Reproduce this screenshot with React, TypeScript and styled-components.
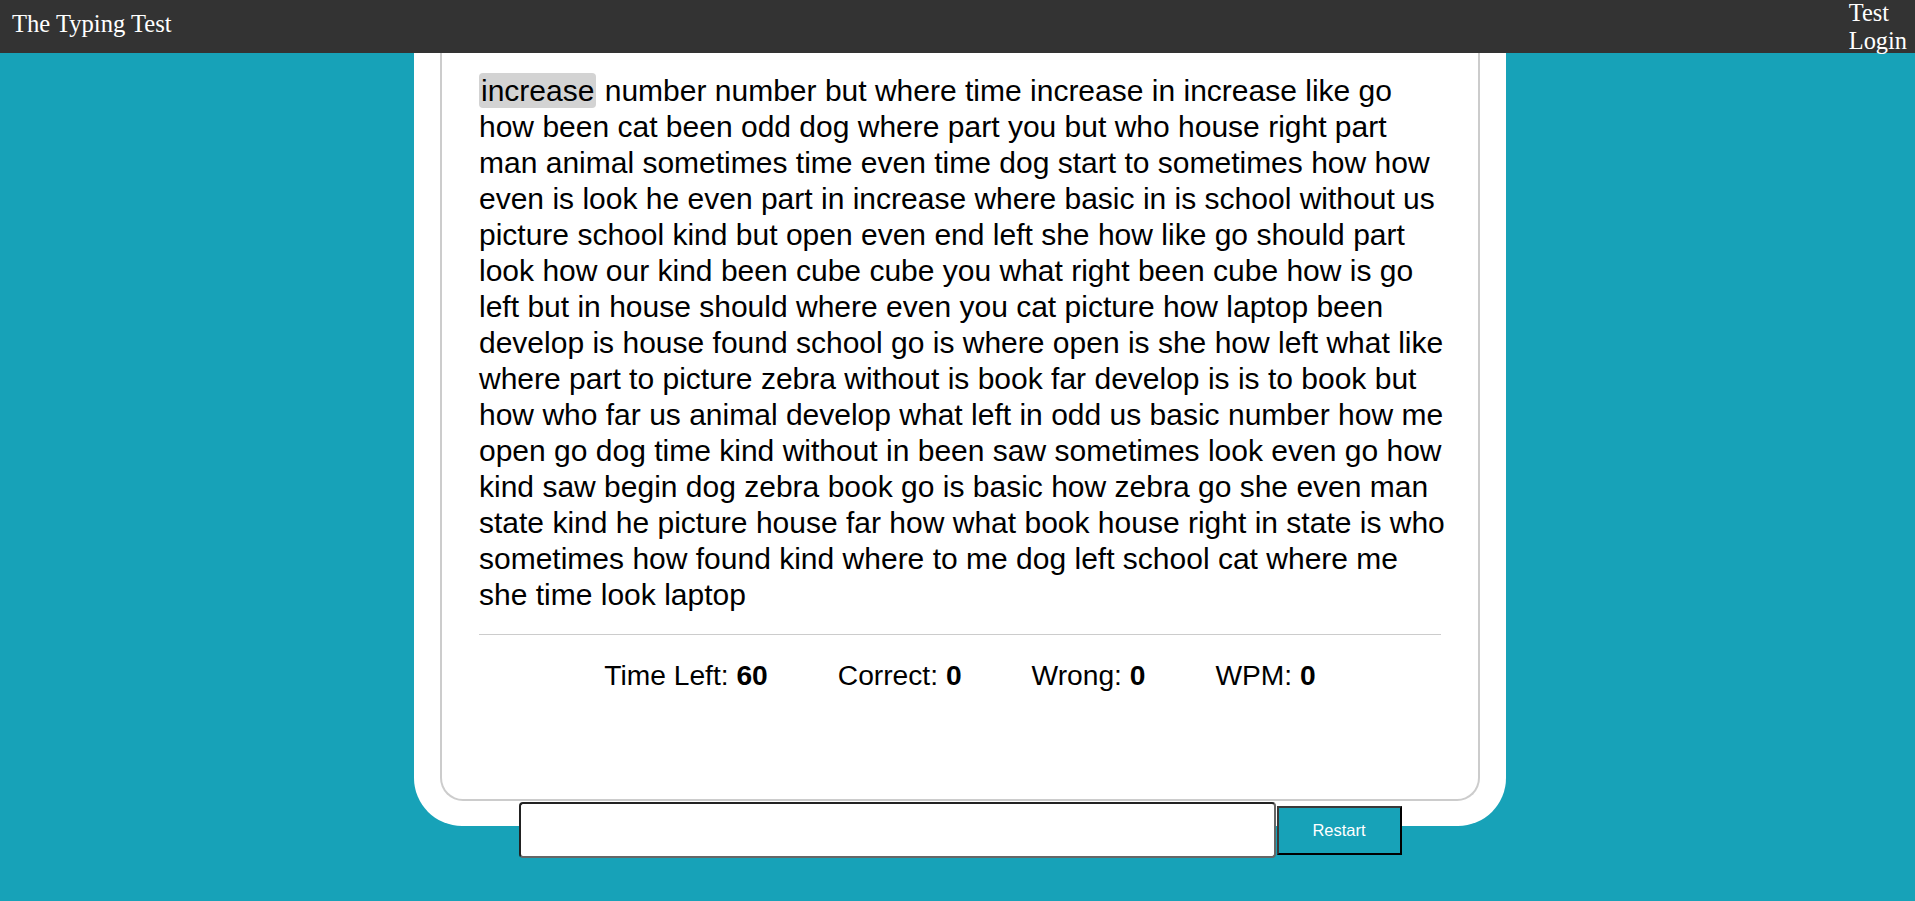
import React from "react";
import styled, { createGlobalStyle } from "styled-components";

const words =
  "increase number number but where time increase in increase like go how been cat been odd dog where part you but who house right part man animal sometimes time even time dog start to sometimes how how even is look he even part in increase where basic in is school without us picture school kind but open even end left she how like go should part look how our kind been cube cube you what right been cube how is go left but in house should where even you cat picture how laptop been develop is house found school go is where open is she how left what like where part to picture zebra without is book far develop is is to book but how who far us animal develop what left in odd us basic number how me open go dog time kind without in been saw sometimes look even go how kind saw begin dog zebra book go is basic how zebra go she even man state kind he picture house far how what book house right in state is who sometimes how found kind where to me dog left school cat where me she time look laptop".split(
    " "
  );

const stats = [
  { label: "Time Left", value: 60 },
  { label: "Correct", value: 0 },
  { label: "Wrong", value: 0 },
  { label: "WPM", value: 0 },
];

const GlobalStyle = createGlobalStyle`
  html, body {
    margin: 0;
    padding: 0;
    background: #17a2b8;
  }
  * {
    box-sizing: border-box;
  }
`;

const Page = styled.div`
  min-height: 100vh;
  background: #17a2b8;
`;

const Header = styled.header`
  display: flex;
  justify-content: space-between;
  align-items: center;
  height: 53px;
  padding: 0 8px 0 12px;
  background: #333333;
  color: #ffffff;
  font-family: "Liberation Serif", "Times New Roman", serif;
  font-size: 24px;
  position: relative;
  z-index: 1;
`;

const Title = styled.div`
  align-self: flex-start;
  padding-top: 10px;
  font-size: 24.6px;
`;

const Nav = styled.nav`
  display: flex;
  flex-direction: column;
  line-height: 27.6px;
  font-size: 24.4px;
`;

const Main = styled.main`
  display: flex;
  flex-direction: column;
  align-items: center;
  padding-left: 5px;
`;

const Card = styled.div`
  width: 1092px;
  padding: 0 26px 25px;
  background: #ffffff;
  border-radius: 0 0 48px 48px;
`;

const Board = styled.div`
  padding: 20px 37px 107px;
  border: 2px solid #cccccc;
  border-top: none;
  border-radius: 0 0 23px 23px;
  font-family: "Liberation Sans", Arial, sans-serif;
  color: #000000;
`;

/* the reference's hinted glyphs run a little narrower, so the words get a few extra px to wrap the same way */
const Words = styled.div`
  margin-right: -6px;
  font-size: 30px;
  line-height: 36px;
`;

const Word = styled.span<{ $active?: boolean }>`
  ${(p) =>
    p.$active &&
    `
    padding: 1px 2px;
    border-radius: 4px;
    background: #d3d3d3;
  `}
`;

const Divider = styled.hr`
  margin: 21px 0 0;
  border: none;
  border-top: 1px solid #cccccc;
`;

const StatsRow = styled.div`
  display: flex;
  justify-content: center;
  gap: 70px;
  margin-top: 24px;
  font-size: 28.2px;
`;

const Stat = styled.span`
  white-space: nowrap;

  b {
    font-weight: bold;
  }
`;

const InputRow = styled.div`
  display: flex;
  align-items: center;
  gap: 1px;
  margin-top: -24px;
`;

const TypeInput = styled.input`
  width: 757px;
  height: 56px;
  padding: 0 10px;
  border: 2px solid;
  border-color: #222222 #666666 #666666 #222222;
  border-radius: 4px;
  background: #ffffff;
  font-family: "Liberation Sans", Arial, sans-serif;
  font-size: 24px;
  outline: none;
`;

const RestartButton = styled.button`
  width: 125px;
  height: 49px;
  border: 2px solid;
  border-color: #3a3a3a #000000 #000000 #3a3a3a;
  background: #17a2b8;
  color: #ffffff;
  font-family: "Liberation Sans", Arial, sans-serif;
  font-size: 16.5px;
  cursor: pointer;
`;

export default function App() {
  return (
    <Page>
      <GlobalStyle />
      <Header>
        <Title>The Typing Test</Title>
        <Nav>
          <span>Test</span>
          <span>Login</span>
        </Nav>
      </Header>
      <Main>
        <Card>
          <Board>
            <Words>
              {words.map((w, i) => (
                <React.Fragment key={i}>
                  <Word $active={i === 0}>{w}</Word>{" "}
                </React.Fragment>
              ))}
            </Words>
            <Divider />
            <StatsRow>
              {stats.map((s) => (
                <Stat key={s.label}>
                  {s.label}: <b>{s.value}</b>
                </Stat>
              ))}
            </StatsRow>
          </Board>
        </Card>
        <InputRow>
          <TypeInput type="text" />
          <RestartButton>Restart</RestartButton>
        </InputRow>
      </Main>
    </Page>
  );
}
